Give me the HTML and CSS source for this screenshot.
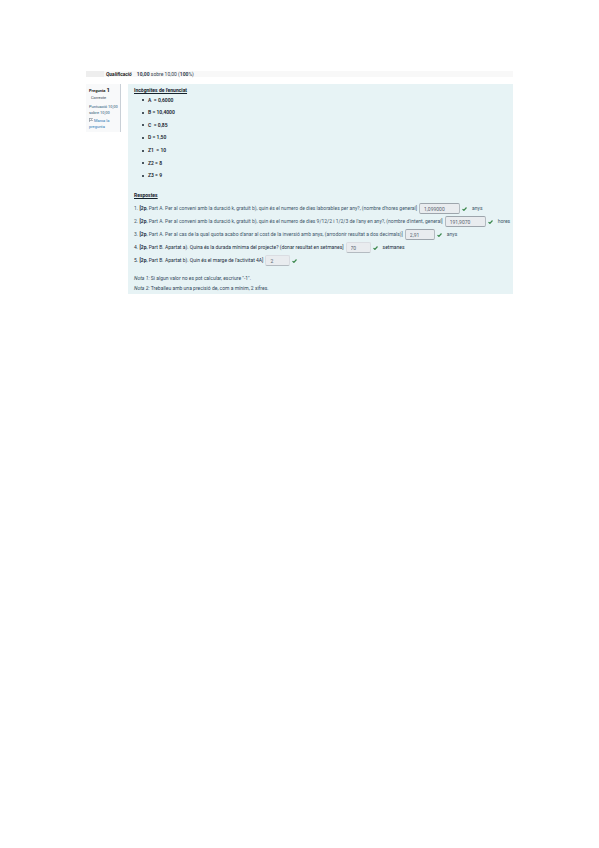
FILE: index.html
```html
<!DOCTYPE html>
<html lang="ca">
<head>
<meta charset="utf-8">
<title>Revisió del qüestionari</title>
<link rel="stylesheet" href="styles.css">
</head>
<body>
<svg class="defs" aria-hidden="true"><symbol id="check" viewBox="0 0 10 8"><path d="M1 4.2 3.8 6.8 9 1" fill="none" stroke="#3f8a50" stroke-width="2.4"/></symbol></svg>
<main class="page">
  <header class="grade">
    <span class="grade-label">Qualificació</span>
    <p><b>10,00</b> sobre 10,00 (<b>100</b>%)</p>
  </header>
  <div class="question">
    <aside class="info">
      <h2>Pregunta <span class="number">1</span></h2>
      <p class="state">Correcte</p>
      <p class="mark">Puntuació 10,00 sobre 10,00</p>
      <a class="flag" href="#"><svg class="pennant" viewBox="0 0 8 8"><path d="M1 0v8M1 1h6L5 3l2 2H1" fill="none" stroke="#66717c"/></svg> Marca la pregunta</a>
    </aside>
    <section class="content">
      <h3>Incògnites de l'enunciat</h3>
      <ul class="values">
        <li>A &nbsp;= 0,6000</li>
        <li>B = 10,4000</li>
        <li>C &nbsp;= 0,85</li>
        <li>D = 1,50</li>
        <li>Z1 &nbsp;= 10</li>
        <li>Z2 = 8</li>
        <li>Z3 = 9</li>
      </ul>
      <h3>Respostes</h3>
      <div class="answers">
        <div class="row">
          <label for="a1">1. <b>[2p</b>, Part A. Per al conveni amb la duració k, gratuït b), quin és el numero de dies laborables per any?, (nombre d'hores general]</label>
          <input class="wide" id="a1" value="1,099000" readonly><svg class="tick"><use href="#check"/></svg><span>anys</span>
        </div>
        <div class="row">
          <label for="a2">2. <b>[2p</b>, Part A. Per al conveni amb la duració k, gratuït b), quin és el numero de dies 9/12/2 i 1/2/3 de l'any en any?, (nombre d'intent, general]</label>
          <input class="wide" id="a2" value="191,9070" readonly><svg class="tick"><use href="#check"/></svg><span>hores</span>
        </div>
        <div class="row">
          <label for="a3">3. <b>[2p</b>, Part A. Per al cas de la qual quota acabo d'anar al cost de la inversió amb anys, (arrodonir resultat a dos decimals)]</label>
          <input class="mid" id="a3" value="2,91" readonly><svg class="tick"><use href="#check"/></svg><span>anys</span>
        </div>
        <div class="row dark">
          <label for="a4">4. <b>[2p</b>, Part B. Apartat a). Quina és la durada mínima del projecte? (donar resultat en setmanes]</label>
          <input class="small" id="a4" value="70" readonly><svg class="tick"><use href="#check"/></svg><span>setmanes</span>
        </div>
        <div class="row dark">
          <label for="a5">5. <b>[2p</b>, Part B. Apartat b). Quin és el marge de l'activitat 4A]</label>
          <input class="small" id="a5" value="2" readonly><svg class="tick"><use href="#check"/></svg>
        </div>
      </div>
      <div class="notes">
        <p><i>Nota 1:</i> Si algun valor no es pot calcular, escriure "-1".</p>
        <p><i>Nota 2:</i> Treballeu amb una precisió de, com a mínim, 2 xifres.</p>
      </div>
    </section>
  </div>
</main>
</body>
</html>
```
FILE: styles.css
```css
* { box-sizing: border-box; }
body {
  margin: 0;
  background: #fff;
  color: #34424f;
  font: 5px/7px Roboto, "Liberation Sans", sans-serif;
}
h2, h3, p, ul { margin: 0; padding: 0; }
.defs { position: absolute; width: 0; height: 0; }
.page { margin: 71px 86px 0; }
.grade {
  display: flex;
  gap: 5px;
  height: 6px;
  line-height: 6px;
  padding-left: 20px;
  background: linear-gradient(90deg, #eeeeee 0 18px, #f8f8f8 18px);
}
.grade-label { font-weight: 700; font-style: italic; color: #222; }
.question { display: flex; align-items: flex-start; gap: 7px; margin-top: 7px; }
.info {
  flex: 0 0 35px;
  padding: 2px 1px 2px 3px;
  background: #f8f9fa;
  border-right: 1px solid #cad0d7;
  font-size: 4px;
  line-height: 6px;
}
.info h2 { font-size: 4px; line-height: 8px; color: #222; }
.number { font-size: 6px; }
.state { padding-left: 2px; margin-bottom: 3px; }
.mark { margin-bottom: 2px; color: #2c5878; }
.flag { display: block; color: #2678b5; text-decoration: none; }
.pennant { width: 4px; height: 4px; }
.content { flex: 1; min-width: 0; padding: 3px 0 1px 6px; background: #e7f3f5; }
h3 { font-size: 5px; line-height: 7px; color: #14212b; text-decoration: underline; }
.values {
  display: grid;
  grid-auto-rows: 1fr;
  height: 88px;
  margin-bottom: 10px;
  padding-left: 8px;
  color: #14212b;
  list-style: none;
  font-weight: 600;
}
.values li { display: flex; align-items: center; }
.values li::before { content: ""; width: 2px; height: 2px; margin-right: 4px; border-radius: 1px; background: #14212b; }
.answers { margin-top: 3px; }
.row { display: flex; align-items: center; height: 13px; white-space: nowrap; color: #40566a; }
.row > * { flex-shrink: 0; }
.row b, .dark { color: #1d2f3f; }
input {
  height: 11px;
  margin: 0 2px;
  padding: 0 4px;
  border: 1px solid #9da5ac;
  border-color: #9da5ac #b4bbc1;
  border-radius: 2px;
  background: #e9ecef;
  color: #596570;
  font: inherit;
}
.wide { width: 41px; }
.mid { width: 30px; }
.small { width: 25px; border-color: #dadde2 #dadde2 #b4bbc1; }
.tick { width: 5px; height: 4px; margin-right: 5px; }
.notes { margin-top: 6px; line-height: 10px; color: #34495b; }
```
